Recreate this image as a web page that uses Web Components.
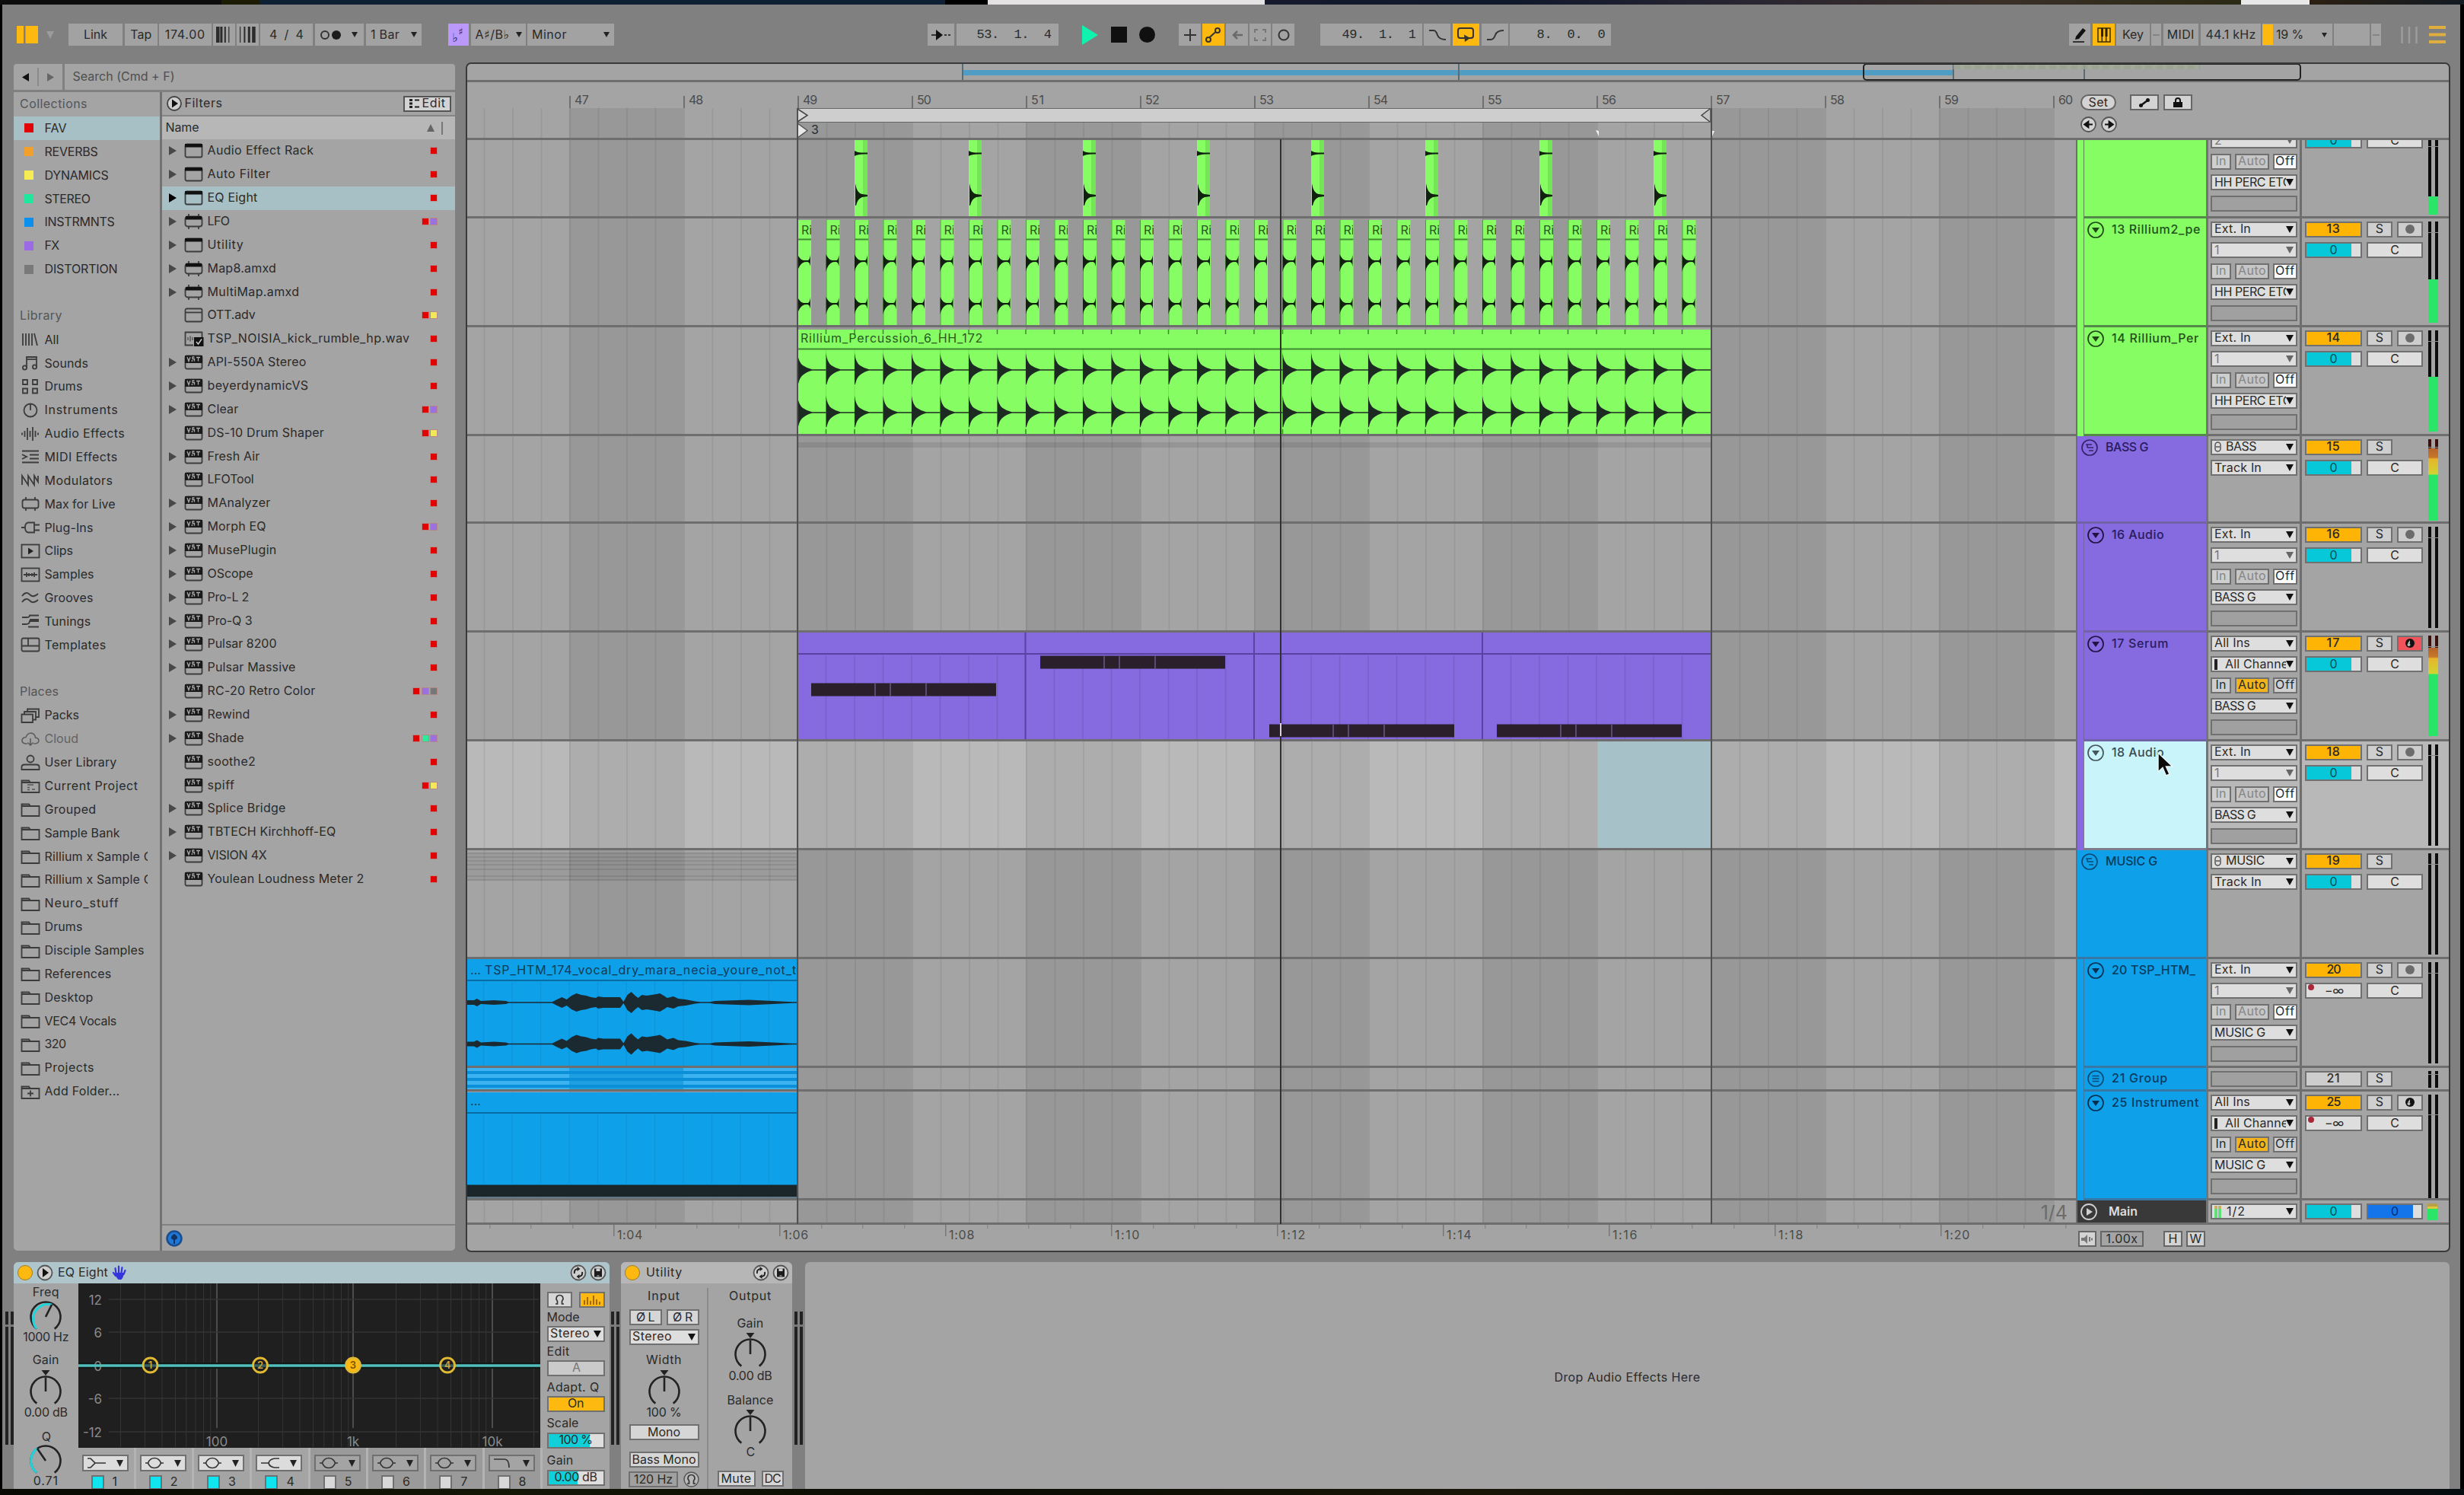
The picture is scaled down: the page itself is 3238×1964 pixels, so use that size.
<!DOCTYPE html>
<html lang="en"><head><meta charset="utf-8"><title>Live Set</title>
<style>
html,body{margin:0;padding:0;background:#000}
body{width:3238px;height:1964px;overflow:hidden;font-family:Inter,"Liberation Sans",sans-serif;font-size:16px;color:#2a2a2a}
</style></head><body>
<live-app></live-app>
<script>
const BASE=`:host{display:block;box-sizing:border-box}*{box-sizing:border-box}svg{display:block;overflow:visible}.v{display:flex;flex-direction:column}.h{display:flex}.c{display:flex;align-items:center;justify-content:center}`;
function def(name,css,render){
  customElements.define(name,class extends HTMLElement{
    connectedCallback(){
      if(this.shadowRoot)return;
      const r=this.attachShadow({mode:'open'});
      r.innerHTML=`<style>${BASE}${css}</style>${render(this)}`;
    }
  });
}
const A=(e,n,d='')=>e.getAttribute(n)??d;
const T=(s,w,st='')=>`<t-x ${w?`w="${w}"`:''} style="${st}">${s}</t-x>`;
/* horizontal run: items are [left, right, markup, style] */
function run(start,items){let p=start;return items.map(([a,b,m,s=''])=>{const o=`<div class="c" style="flex:none;margin-left:${(a-p).toFixed(2)}px;width:${(b-a).toFixed(2)}px;${s}">${m}</div>`;p=b;return o}).join('')}
/* vertical stack: items are [centre, height, markup, style] */
function stack(start,items){let p=start;return items.map(([c,h,m,s=''])=>{const t=c-h/2;const o=`<div class="c" style="flex:none;margin-top:${(t-p).toFixed(2)}px;height:${h}px;${s}">${m}</div>`;p=t+h;return o}).join('')}
const svg=(w,h,b,st='')=>`<svg width="${w}" height="${h}" viewBox="0 0 ${w} ${h}" style="flex:none;${st}">${b}</svg>`;
const tri=(c='#111',w=11,h=9)=>svg(w,h,`<path d="M0 0H${w}L${w/2} ${h}Z" fill="${c}"/>`);

def('t-x',`:host{display:inline-block;white-space:pre;line-height:19px;padding-bottom:1px;flex:none}`,()=>`<slot></slot>`);

/* ---------- toolbar ---------- */
def('tool-bar',`:host{height:76px;padding-top:25px}.bar{display:flex;height:29px}.b{height:29px;background:#a3a3a3}.g{display:flex}`,()=>{
  const B='background:#a2a2a2;height:29px;',Y='background:#fdb90f;height:29px;',S='stroke="#333" fill="none" stroke-width="2"';
  const bars=(ws)=>svg(22,21,ws.map((w,i)=>`<rect x="${i*5.4}" width="${w}" height="21" fill="#2c2c2c"/>`).join(''));
  const it=[
   [22,50,svg(28,23,`<path d="M0 0H9V23H0ZM11.5 0H28V23H11.5Z" fill="#fdb90f"/>`)],
   [60,71,tri('#9b9b9b',10,10)],
   [90,161,T('Link',31),B],[163.5,207,T('Tap',28),B],[209,277.5,T('174.00',53),B],
   [280,309,bars([4.5,3,2,1.2]),B],[311,340,bars([1.2,2,3,4.5]),B],
   [342,411,T('4 &nbsp;/ &nbsp;4',45),B],
   [413.5,478,svg(28,14,`<circle cx="6" cy="7" r="5" ${S}/><circle cx="21" cy="7" r="6" fill="#1c1c1c"/>`)+'<i style="width:13px"></i>'+tri('#222',8,7),B],
   [481,554,T('1 Bar',38)+'<i style="width:15px"></i>'+tri('#222',8,7),B],
   [588.5,616,T('♭',8,'font:16px DejaVu Sans;margin-top:8px')+T('♯',8,'font:13px DejaVu Sans;margin-top:-8px'),'background:#bb99fb;height:29px;color:#35235a'],
   [619,691,T('A♯/B♭',45,'font-family:Inter,DejaVu Sans')+'<i style="width:8px"></i>'+tri('#222',8,7),B],
   [693,807,T('Minor',46)+'<i style="width:48px"></i>'+tri('#222',8,7),B],
   [1219,1254,svg(26,14,`<path d="M0 7H8" ${S} stroke-width="2.5"/><path d="M6 0L15 7L6 14Z" fill="#111"/><path d="M17 7h3M22 7h3" ${S}/>`),B],
   [1256.5,1390.5,T('53. &nbsp;1. &nbsp;4',98,'font:17px Liberation Mono;margin-left:18px'),B],
   [1422,1443,svg(21,26,`<path d="M0 0L21 13L0 26Z" fill="#0ff3ae"/>`)],
   [1460,1481,svg(21,21,`<rect width="21" height="21" fill="#101010"/>`)],
   [1497,1518,svg(21,21,`<circle cx="10.5" cy="10.5" r="10.5" fill="#101010"/>`)],
   [1549,1578,svg(16,16,`<path d="M8 0V16M0 8H16" ${S}/>`),B],
   [1579.5,1609,svg(20,20,`<path d="M5.5 13L9 10L11 8L14 6" ${S}/><circle cx="4" cy="16" r="3" ${S}/><circle cx="16" cy="4" r="3" ${S}/>`),Y],
   [1611,1640,svg(14,12,`<path d="M2 6H14M7 1L2 6L7 11" stroke="#6a6a6a" fill="none" stroke-width="2.5"/>`),B],
   [1642,1670,svg(16,16,`<path d="M1 5V1H5M11 1H15V5M15 11V15H11M5 15H1V11" stroke="#777" fill="none" stroke-width="2"/>`),B],
   [1672,1701,svg(16,16,`<circle cx="8" cy="8" r="6.5" ${S}/>`),B],
   [1735,1869,T('49. &nbsp;1. &nbsp;1',97,'font:17px Liberation Mono;margin-left:20px'),B],
   [1871,1906,svg(22,14,`<path d="M0 1H6Q9 1 11 7Q13 13 22 13" ${S}/>`),B],
   [1908.5,1944,svg(22,20,`<path d="M15 14H18Q21 14 21 11V4Q21 1 18 1H4Q1 1 1 4V11Q1 14 4 14H11" ${S}/><path d="M9 9.5L17 14L10 19Z" fill="#333"/>`),Y],
   [1947,1982,svg(22,14,`<path d="M0 13H5Q9 13 11 7Q13 1 22 1" ${S}/>`),B],
   [1984,2117,T('8. &nbsp;0. &nbsp;0',90,'font:17px Liberation Mono;margin-left:28px'),B],
   [2719,2747,svg(20,20,`<path d="M5 12L14 1L18 4L9 15L4 16Z" fill="#111"/><path d="M1 19H16" ${S}/>`),B],
   [2750,2779,svg(18,20,`<path d="M1 1H17V19H1ZM6.3 1V19M11.7 1V19" stroke="#3a2c05" fill="none" stroke-width="1.5"/><path d="M5 1h3v11H5zM10.500 1h3v11h-3z" fill="#2b2105"/>`),Y],
   [2781,2825,T('Key',28),B],[2827,2840,'<i style="width:9px;height:2px;background:#858585"></i>',B],
   [2842.5,2889,T('MIDI',36),B],[2892,2971,T('44.1 kHz',66),B],
   [2973,3065,'<i style="width:14px;height:27px;background:#fdb90f;margin-right:4px"></i>'+T('19 %',36)+'<i style="width:24px"></i>'+tri('#222',7,6)+'<i style="flex:1"></i>',B+'justify-content:flex-start'],
   [3067,3114,'',B],[3116,3129,'<i style="width:9px;height:2px;background:#858585"></i>',B],
   [3155,3178,svg(23,22,`<path d="M1.500 0V22M11 0V22M20.500 0V22" stroke="#9c9c9c" stroke-width="2.500"/>`)],
   [3192,3214,svg(22,23,`<path d="M0 2H22M0 11.500H22M0 21H22" stroke="#dfae3e" stroke-width="4"/>`)]];
  return `<div class="bar">${run(3,it)}</div>`;
});

/* ---------- browser ---------- */
const K='stroke="#3c3c3c" fill="none" stroke-width="1.8"';
const folder=`<path d="M1.500 3.500H11L13 6H24.500V19H1.500ZM1.500 6H13" ${K}/>`;
const ICON={
 all:`<path d="M3 2V18M7 2V18M11 2V18M15 2V18M18 2L22 18" ${K}/>`,
 sounds:`<path d="M8 16V2H21V15" ${K}/><path d="M8 5H21" ${K}/><circle cx="5.500" cy="16" r="2.600" ${K}/><circle cx="18.500" cy="15" r="2.600" ${K}/>`,
 drums:`<path d="M3 1H9V7H3ZM16 1H22V7H16ZM3 12.500H9V18.500H3ZM16 12.500H22V18.500H16Z" ${K}/>`,
 inst:`<circle cx="13" cy="10" r="8.500" ${K}/><path d="M13 2V10" ${K}/>`,
 afx:`<path d="M2 8.500V11.500M5.500 6V14M9 2V18M12.500 6V14M16 1V19M19.500 6V14M23 8.500V11.500" ${K}/>`,
 mfx:`<path d="M2 2.500H24M2 17.500H24M12 7.500H24M12 12.500H24M2 7L8 10L2 13" ${K}/>`,
 mod:`<path d="M2 16V4L10 16V4L18 16V4L23 12V4" ${K}/>`,
 max:`<rect x="2.500" y="4.500" width="21" height="11" rx="2.500" ${K}/><path d="M7 1V4.500M19 1V4.500M7 15.500V19M19 15.500V19" ${K}/>`,
 plug:`<path d="M1 10H6M18 6.500H25M18 13.500H25" ${K}/><path d="M10 3.500H18V16.500H10Q6 16 6 10Q6 4 10 3.500Z" ${K}/>`,
 clips:`<rect x="1.500" y="1.500" width="23" height="17" ${K}/><path d="M10 5.500L17 10L10 14.500Z" fill="#222"/>`,
 samples:`<rect x="1.500" y="1.500" width="23" height="17" ${K}/><path d="M4 10H22M8 7V13M11 8V12M15 8V12M18 7V13" ${K}/>`,
 grooves:`<path d="M2 7Q7 0 12 5T23 4M2 15Q7 8 12 13T23 12" ${K}/>`,
 tunings:`<path d="M2 5H8Q12 5 12 2.500H24M2 14H7Q12 14 12 10H24M12 8H24M10 17.500H24" ${K}/>`,
 templates:`<rect x="1.500" y="1.500" width="23" height="17" rx="2" ${K}/><path d="M1.500 11.500H24.500M10 1.500V11.500" ${K}/>`,
 packs:`<path d="M1.500 8.500H16V19H1.500ZM5 8.500V5H20V15.500H16M9 5V1.500H24V12H20" ${K}/>`,
 cloud:`<path d="M9 16H6Q1.500 15 2 11Q3 7.500 7 7.500Q9 2 14 2Q19 3 19.500 8Q24 8.500 24 12.500Q23.500 16 17 16M13 9V18M9.500 14.500L13 18L16.500 14.500" stroke="#5d5d5d" fill="none" stroke-width="1.600"/>`,
 user:`<circle cx="13" cy="5" r="4.500" ${K}/><path d="M1.500 19V15Q2 12.500 5 12.500H21Q24 12.500 24.500 15V19Z" ${K}/>`,
 proj:folder+`<path d="M9 9H17M9 12.500H12M15 15H19M9 15.500H12" stroke="#555" stroke-width="1.500"/>`,
 folder,
 add:folder+`<path d="M13 8.500V16.500M9 12.500H17" ${K}/>`
};
def('nav-row',`:host{height:30.87px;display:flex;align-items:center;padding-left:9px;overflow:hidden;width:191.500px}
 :host([on]){background:#a6c0c6}.i{width:31.500px;flex:none}.s{width:12px;height:12px;margin-left:5px}:host([head]){padding-left:8px;color:#555}:host([dim]){color:#636363}.clip{overflow:hidden;width:135px;flex:none;white-space:nowrap}`,e=>{
  if(e.hasAttribute('head'))return T(A(e,'label'),A(e,'w'));
  const sw=A(e,'sw');
  return `<div class="i">${sw?`<div class="s" style="background:${sw}"></div>`:svg(26,20,ICON[A(e,'icon')]||'')}</div><div class="clip">${T(A(e,'label'),A(e,'w'))}</div>`;
});
const FI={
 dev:`<rect x="1.500" y="1.500" width="22" height="17" rx="2" ${K}/><path d="M1 1H24V5.500H1Z" fill="#111"/>`,
 max:`<rect x="1.500" y="3.500" width="22" height="13" rx="3" ${K}/><path d="M2 3H23V7.500H2Z" fill="#111"/><path d="M6 0V3M19 0V3M6 17V20M19 17V20" ${K}/>`,
 pre:`<rect x="1.500" y="1.500" width="22" height="17" rx="2" ${K}/><path d="M1.500 6.500H23.500" ${K}/>`,
 wav:`<path d="M12 18.500H1.500V1.500H23.500V8" ${K}/><path d="M5 8V12M8 6.500V13.500M11 8V12" stroke="#555" stroke-width="1.500"/><rect x="13" y="8" width="12.500" height="12" fill="#111"/><path d="M16 14L18.500 17L23 10.500" stroke="#ccc" fill="none" stroke-width="1.500"/>`,
 vst:`<rect x="1.500" y="1.500" width="22" height="17" rx="2" ${K}/><path d="M1 1H24V11H1Z" fill="#1a1a1a"/><path d="M4 3L6 8.500L8 3M11.500 8H9.500M13.500 3H11V5.500H13.500V8.500M16 3.500H21M18.500 3.500V8.500" stroke="#aaa" fill="none" stroke-width="1.300"/>`
};
const DC={r:'#e10303',p:'#9c70e0',y:'#f3e85b',g:'#2fe89c',d:'#777'};
def('file-row',`:host{height:30.87px;display:flex;align-items:center;padding-left:9px;padding-right:24px}:host([on]){background:#a6c0c6}.a{width:20px;flex:none}.i{width:31px;flex:none}.d{margin-left:auto;display:flex;gap:3.500px}.d i{width:8px;height:8px;outline:1px solid #d8403a44}`,e=>
 `<div class="a">${e.hasAttribute('leaf')?'':svg(10,12,`<path d="M0 0L10 6L0 12Z" fill="${e.hasAttribute('on')?'#000':'#484848'}"/>`)}</div><div class="i">${svg(25,20,FI[A(e,'icon')])}</div>${T(A(e,'label'),A(e,'w'))}<div class="d">${[...A(e,'dots')].map(c=>`<i style="background:${DC[c]}"></i>`).join('')}</div>`);
def('browser-panel',`:host{width:580px;margin:2px 0 0 15px;display:flex;flex-direction:column}
 .s{height:34px;display:flex;gap:3px}.nv{width:63.500px;background:#a4a4a4;border-radius:4px 0 0 0;display:flex;align-items:center}.nv>*{flex:1;height:24px}.nv>*+*{border-left:2px solid #8a8a8a}
 .q{flex:1;background:#a4a4a4;border-radius:0 4px 0 0;display:flex;align-items:center;padding-left:11px;color:#4e4e4e}
 .b{margin-top:3px;height:1522px;display:flex;background:#a4a4a4;border-radius:0 0 5px 5px;overflow:hidden}.l{width:194.500px;border-right:3px solid #727272}.hd{height:32px;padding-left:8px;display:flex;align-items:center;color:#555}
 .r{flex:1;display:flex;flex-direction:column}.fh{height:32px;border-bottom:2px solid #858585;display:flex;align-items:center;padding:0 5px 0 6px}.ed{margin-left:auto;width:63px;height:21px;border:2px solid #555;background:#d3d3d3;gap:4px}
 .nm{height:30px;background:#b7b7b7;display:flex;align-items:center;padding:0 16px 0 5px}.ft{margin-top:auto;height:35px;border-top:2px solid #818181;padding:6px 0 0 5px}`,()=>{
 const C=[['FAV',29,'#e10303',1],['REVERBS',70,'#f2a02b'],['DYNAMICS',84,'#f6ec53'],['STEREO',60,'#1fe79c'],['INSTRMNTS',92,'#0b90ee'],['FX',19,'#9b6be4'],['DISTORTION',96,'#797979']];
 const L=[['All',19,'all'],['Sounds',57.5,'sounds'],['Drums',50,'drums'],['Instruments',97,'inst'],['Audio Effects',105.5,'afx'],['MIDI Effects',96,'mfx'],['Modulators',90,'mod'],['Max for Live',93,'max'],['Plug-Ins',64,'plug'],['Clips',37.5,'clips'],['Samples',65,'samples'],['Grooves',64,'grooves'],['Tunings',61,'tunings'],['Templates',81,'templates']];
 const P=[['Packs',45.5,'packs'],['Cloud',44.5,'cloud'],['User Library',95,'user'],['Current Project',123,'proj'],['Grouped',68,'folder'],['Sample Bank',99,'folder'],['Rillium x Sample C',142,'folder'],['Rillium x Sample C',142,'folder'],['Neuro_stuff',98,'folder'],['Drums',50,'folder'],['Disciple Samples',131,'folder'],['References',88,'folder'],['Desktop',64,'folder'],['VEC4 Vocals',94.5,'folder'],['320',28,'folder'],['Projects',65.5,'folder'],['Add Folder...',99,'add']];
 const F=[['Audio Effect Rack',140,'dev','r'],['Auto Filter',83,'dev','r'],['EQ Eight',66,'dev','r'],['LFO',29,'max','rp'],['Utility',48,'dev','r'],['Map8.amxd',90.5,'max','r'],['MultiMap.amxd',121,'max','r'],['OTT.adv',63,'pre','ry',1],['TSP_NOISIA_kick_rumble_hp.wav',266,'wav','r',1],['API-550A Stereo',130,'vst','r'],['beyerdynamicVS',133,'vst','r'],['Clear',41,'vst','rp'],['DS-10 Drum Shaper',153.5,'vst','ry',1],['Fresh Air',69,'vst','r'],['LFOTool',61,'vst','r',1],['MAnalyzer',83,'vst','r'],['Morph EQ',77,'vst','rp'],['MusePlugin',91,'vst','r'],['OScope',60,'vst','r'],['Pro-L 2',54.5,'vst','r'],['Pro-Q 3',59,'vst','r'],['Pulsar 8200',91,'vst','r'],['Pulsar Massive',116,'vst','r'],['RC-20 Retro Color',142,'vst','rpd',1],['Rewind',56,'vst','r'],['Shade',48,'vst','rgp'],['soothe2',63.6,'vst','r',1],['spiff',36,'vst','ry',1],['Splice Bridge',103,'vst','r'],['TBTECH Kirchhoff-EQ',169,'vst','r'],['VISION 4X',78,'vst','r'],['Youlean Loudness Meter 2',206,'vst','r',1]];
 const n=a=>a.map(([l,w,i])=>`<nav-row label="${l}" w="${w}" icon="${i}" ${i=='cloud'?'dim':''}></nav-row>`).join('');
 return `<div class="s"><div class="nv"><div class="c">${svg(9,11,'<path d="M9 0V11L0 5.500Z" fill="#111"/>')}</div><div class="c">${svg(9,11,'<path d="M0 0V11L9 5.500Z" fill="#666"/>')}</div></div><div class="q">${T('Search (Cmd + F)',134)}</div></div>
 <div class="b"><div class="l"><div class="hd">${T('Collections',89)}</div>${C.map(([l,w,c,o])=>`<nav-row label="${l}" w="${w}" sw="${c}" ${o?'on':''}></nav-row>`).join('')}<nav-row></nav-row><nav-row head label="Library" w="56"></nav-row>${n(L)}<nav-row></nav-row><nav-row head label="Places" w="51"></nav-row>${n(P)}</div>
 <div class="r"><div class="fh">${svg(20,20,'<circle cx="10" cy="10" r="9" fill="#d0d0d0" stroke="#444" stroke-width="1.800"/><path d="M7 4.500L15 10L7 15.500Z" fill="#111"/>')}<i style="width:4px"></i>${T('Filters',50)}<div class="ed c">${svg(13,12,'<path d="M0 1.500H4M0 6H4M0 10.500H4" stroke="#222" stroke-width="3"/><path d="M7 1.500H13M7 10.500H13" stroke="#222" stroke-width="2"/>')}${T('Edit',31)}</div></div>
 <div class="nm">${T('Name',44)}<i style="flex:1"></i>${svg(10,10,'<path d="M5 0L10 10H0Z" fill="#666"/>')}<i style="width:2px;height:17px;background:#777;margin-left:9px"></i></div>
 ${F.map(([l,w,i,d,f],k)=>`<file-row label="${l}" w="${w}" icon="${i}" dots="${d}" ${f?'leaf':''} ${k==2?'on':''}></file-row>`).join('')}
 <div class="ft"><div style="width:22px">${svg(22,22,'<circle cx="11" cy="11" r="9.500" fill="#1f77d8" stroke="#1b4c8d" stroke-width="2.500"/><path d="M11 5Q16 8 15 11L12 13V18H10V13L7 11Q6 8 11 5Z" fill="#12335f"/>')}</div></div></div></div>`;
});

/* ---------- arrangement lanes ---------- */
const G='#87fd64',P_='#856ae0',BL='#0fa0ea',DK='#1c2a22';
function grid(h,sel){return `background-image:linear-gradient(90deg,rgba(0,0,0,.065) 0 1.500px,transparent 1.500px),linear-gradient(90deg,${sel?'#adadad 0 150px,#b9b9b9 150px':'#989898 0 150px,#a4a4a4 150px'});background-size:37.500px 100%,300px 100%;background-position:134px 0,134px 0;`}
const X0=614,BAR=150,S0=1048-X0;
const VOC=[[20,3],[34,3],[40,5],[48,2],[75,3],[100,2],[105,.7],[195,.7],[205,4],[215,7],[225,4],[235,9],[245,12],[255,10],[265,9],[275,7],[285,6],[290,8],[300,7],[320,7],[335,7],[342,1],[350,10],[358,14],[366,9],[372,6],[380,10],[390,9],[400,10],[410,11],[417,12],[425,9],[432,6],[445,8],[455,5],[470,4],[490,1.5],[500,.7],[520,.7],[530,2],[600,3.5],[650,2],[690,.7],[702,.7]];
const LANES={
 t12(){let s='';for(let k=0;k<8;k++){const x=S0+75+k*150;s+=`<g transform="translate(${x} 0)"><rect width="17" height="100" fill="${G}"/><rect x="11" width="6" height="100" fill="#6cdc50" opacity=".7"/><path d="M0 14Q3 17 17 16.500V18.500Q4 18 0 21Z" fill="#12200f"/><path d="M1 57Q3 70 10 71L17 72V74L10 75Q4 77 2 86H1Z" fill="#12200f"/></g>`}return s},
 t13(){let s='';for(let k=0;k<32;k++){const x=S0+k*37.5;const w=y=>`<path d="M0 ${y-9}Q3 ${y-2} 8 ${y-1}L14 ${y-1}Q16 ${y-2} 17 ${y-8}V${y+7}Q16 ${y+1} 13 ${y+1}L9 ${y+1.2}Q2 ${y+4} 0 ${y+14}Z" fill="#12200f"/>`;s+=`<g transform="translate(${x} 0)"><rect y="2" width="18" height="138" fill="${G}"/><path d="M.5 2V140" stroke="#4c9a3a"/><path d="M0 27.500H18" stroke="#3f8a30" stroke-width="2"/>${w(56)}${w(112)}</g>`}return s},
 t14(){let s=`<rect x="${S0}" y="3" width="1200" height="137" fill="${G}"/><path d="M${S0} 28.500h1200" stroke="#3f8a30" stroke-width="2"/>`;
  for(let k=0;k<32;k++){const x=S0+k*37.5;const w=y=>`<path d="M0 ${y-22}Q1.500 ${y-10} 7 ${y-6}Q13 ${y-2} 19 ${y-.7}H37.500V${y+.7}H19Q12 ${y+2.500} 8 ${y+6}Q3 ${y+9} .8 ${y+19}H0Z" fill="${DK}"/>`;s+=`<g transform="translate(${x} 0)"><path d="M0 3v6M0 134V140" stroke="#2c6a20" stroke-width="1.500" opacity=".8"/><path d="M0 29V140" stroke="#357a28" stroke-width="1" opacity=".2"/>${w(56)}${w(112)}</g>`}return s},
 t15(){return `<rect x="${S0}" y="8" width="1200" height="7" fill="#000" opacity=".09"/>`},
 t17(){let s=`<rect x="${S0}" y="0" width="1200" height="142" fill="${P_}"/>`;for(let k=1;k<32;k++)s+=`<path d="M${S0+k*37.5} 30V140" stroke="#000" opacity=".09" stroke-width="1.500"/>`;
  s+=`<path d="M${S0} 28h1200M${S0+299.5} 0V140M${S0+600} 0V140M${S0+900} 0V140" stroke="#5843a2" stroke-width="2"/>`;
  [[18,66.5],[319,30.5],[620,120.5],[919,120.5]].forEach(([x,y])=>{s+=`<rect x="${S0+x}" y="${y}" width="243" height="17" fill="#2b1f2c"/><path d="M${S0+x+84} ${y}v17M${S0+x+104} ${y}v17M${S0+x+151} ${y}v17" stroke="#6b5a86" stroke-width="1.500"/>`});return s},
 t18(){return `<rect x="${S0+1051.5}" width="148.500" height="140" fill="#a5c3c9" opacity=".93"/>`},
 t19(){let s='<rect y="3" width="434" height="37" fill="#000" opacity=".05"/>';[4,9,14,19,25,34,39].forEach(y=>s+=`<path d="M0 ${y}H434" stroke="#000" opacity=".08" stroke-width="2"/>`);return s},
 t20(){const w=y=>{const f=VOC.map(([x,a])=>[(x-20)/1.568,a]);return `<path d="M${f.map(([x,a])=>`${x.toFixed(1)} ${y-a}`).join('L')}L${f.slice().reverse().map(([x,a])=>`${x.toFixed(1)} ${y+a}`).join('L')}Z" fill="#1b2a30"/>`};
  let s=`<rect width="434" height="141" fill="${BL}"/><path d="M0 28H434" stroke="#0a6ba0" stroke-width="2"/>`;for(let k=0;k<12;k++)s+=`<path d="M${21.500+k*37.5} 30V140" stroke="#000" opacity=".06" stroke-width="1.500"/>`;return s+w(57)+w(111.500)},
 t21(){return `<rect width="434" height="28" fill="#3db2f0"/><rect x="134" width="150" height="28" fill="#1d9fe2"/><path d="M0 6H434M0 15H434M0 24H434" stroke="#0a8fd8" stroke-width="4"/>`},
 t25(){let s=`<rect width="434" height="122" y="1" fill="${BL}"/><path d="M0 28H434" stroke="#0a6ba0" stroke-width="2"/>`;for(let k=0;k<12;k++)s+=`<path d="M${21.500+k*37.5} 30V120" stroke="#000" opacity=".06" stroke-width="1.500"/>`;return s+`<rect y="122.500" width="434" height="16" fill="#1a262a"/><rect y="138.500" width="434" height="5" fill="#5f7f90"/>`}
};
def('track-lane',`:host{flex:none;width:2114px;overflow:hidden;border-bottom:3px solid #6e6e6e;position:relative}.g{height:100%;position:relative}svg{position:absolute;left:0;top:0}
 .nm{position:absolute;left:0;top:0;width:1634px;display:flex;color:#28591f}.ri{width:37.500px;flex:none;padding:5px 0 0 5px}.ri div{width:12.500px;overflow:hidden}.q{position:absolute;top:3px;right:11px;font-size:25px;color:#6c6c6c;line-height:26px}`,e=>{
 const id=A(e,'kind');let t='';
 if(id=='t13')t=`<div class="nm" style="padding-left:434px">${Array(32).fill('<div class="ri"><div>'+T('Ri')+'</div></div>').join('')}</div>`;
 if(id=='t14')t=`<div class="nm" style="padding:4.500px 0 0 438px">${T('Rillium_Percussion_6_HH_172',240)}</div>`;
 if(id=='t20')t=`<div class="nm" style="padding:5px 0 0 4px;width:434px;overflow:hidden;color:#123a56">${T('...',14)}<i style="width:5px;flex:none"></i>${T('TSP_HTM_174_vocal_dry_mara_necia_youre_not_t',410)}</div>`;
 if(id=='t25')t=`<div class="nm" style="padding:3px 0 0 4px;color:#123a56">${T('...',14)}</div>`;
 if(id=='main')t=`<div class="q">1/4</div>`;
 return `<div class="g" style="${grid(0,id=='t18')}">${LANES[id]?svg(2114,10,LANES[id]()):''}${t}</div>`;
});

/* ---------- track header ---------- */
def('value-box',`:host{height:21px;border:2px solid #707070;background:var(--bg,#dedede);display:flex;align-items:center;justify-content:center;overflow:hidden;flex:none}
 :host([drop]){justify-content:flex-start;padding:0 3px 0 3px}.s{flex:1}.t{overflow:hidden;flex:1;display:flex;align-items:center}`,e=>e.hasAttribute('drop')?`<div class="t"><slot></slot></div>${tri(A(e,'drop')=='dim'?'#666':'#111',10,9)}`:`<slot></slot>`);
def('level-meter',`:host{width:13px;display:flex;justify-content:space-between;position:relative;flex:none}i{width:4px;background:#0c0c0c}.f{position:absolute;left:0;right:0;bottom:0}.k{position:absolute;left:0;right:0;height:1.500px;background:#8d8d8d}`,e=>{
 const h=+A(e,'fill','0'),hot=e.hasAttribute('hot');
 return `<i ${hot?'style="background:#3b0f0c"':''}></i><i ${hot?'style="background:#3b0f0c"':''}></i>`+(h?`<div class="f" style="height:${h}px;background:${hot?`linear-gradient(#b5632a 0,#c7772a 12px,#e6b52b 14px,#cfd432 34px,#28e567 35px)`:'#2ae568'}"></div>`:'')+(e.hasAttribute('tick')?`<div class="k" style="top:${A(e,'tick')}px"></div>`:'');
});
def('track-head',`:host{display:flex;width:490px;flex:none;overflow:hidden}
 .name{width:171px;flex:none;display:flex;border-left:2px solid #6e6e6e;background:var(--c)}.st{width:9px;border-right:1.500px solid var(--l);flex:none}.in{flex:1;border-bottom:3px solid var(--l);background:var(--ic,var(--c));padding-top:var(--pt,3.500px);padding-left:4px;display:flex;gap:10px;font-weight:500;overflow:hidden;color:var(--tc,#222)}
 .in t-x{line-height:21px}
 .io{width:123px;border-left:3px solid #757575;border-bottom:3px solid #6e6e6e;padding:3.600px 4px 0 3px;display:flex;flex-direction:column;flex:none;background:var(--bgc,#a4a4a4);overflow:hidden}
 .io value-box{width:114px}.m{display:flex;gap:5px}
 .mx{flex:1;border-left:3px solid #6e6e6e;border-bottom:3px solid #6e6e6e;padding:3.600px 0 0 4px;display:flex;background:var(--bgc,#a4a4a4);overflow:hidden}.ctl{width:162px;display:flex;flex-direction:column;gap:6.600px;flex:none}.r{display:flex;gap:6px}
 .rs{display:flex;flex-direction:column;gap:6.600px}`,e=>{
 const k=A(e,'kind'),n=A(e,'num'),nm=A(e,'label'),w=A(e,'w'),route=A(e,'route'),grp=k=='group',midi=k=='midi',sub=k=='sub',off=+A(e,'cut','0');
 const circ=grp?`<path d="M6 7H14M8 11H16M10 15H16M8 7V11" stroke="${A(e,'ic','#222')}" stroke-width="1.500" fill="none"/>`:sub?`<path d="M6.500 7.500H15.500M6.500 11H15.500M6.500 14.500H15.500" stroke="#0b4a78" stroke-width="1.500"/>`:`<path d="M6 8H16L11 15Z" fill="${A(e,'ic','#222')}"/>`;
 const icon=svg(22,22,`<circle cx="11" cy="11" r="10" fill="none" stroke="${A(e,'ic','#222')}" stroke-width="1.700"/>`+circ);
 const mon=(o)=>{const d='color:#858585';return `<div class="m"><value-box style="width:27px;--bg:#cfcfcf">${T('In',14,o=='midi'?'':d)}</value-box><value-box style="width:45px;--bg:${o=='midi'?'#f3b31a':'#c6c6c6'}">${T('Auto',37,o=='midi'?'':d)}</value-box><value-box style="width:32px;--bg:${o=='midi'?'#cfcfcf':'#fafafa'}">${T('Off',26)}</value-box></div>`};
 let io='';
 if(grp)io=`<value-box drop>${svg(9,14,'<rect x="1" y="1" width="7" height="12" rx="3.500" stroke="#555" stroke-width="1.500" fill="none"/><path d="M2 7H7" stroke="#555" stroke-width="1.500"/>')}<i style="width:6px;flex:none"></i>${T(A(e,'src'),A(e,'sw'))}</value-box><value-box drop>${T('Track In',62)}</value-box>`;
 else if(sub)io=`<value-box style="--bg:#a0a0a0"></value-box>`;
 else io=`<value-box drop>${midi?T('All Ins',47):T('Ext. In',48)}</value-box><value-box drop="${midi?'':'dim'}">${midi?'<i style="flex:none;width:4px;height:14px;background:#222;margin-right:10px"></i>'+T('All Channels',96):T(A(e,'ch','1'),0,'color:#777')}</value-box>${mon(midi?'midi':'')}<value-box drop>${T(route,A(e,'rw'))}</value-box><value-box style="--bg:#a0a0a0"></value-box>`;
 const vol=A(e,'inf')?`<value-box style="width:75px">${svg(8,8,'<circle cx="4" cy="4" r="4" fill="#a8273b"/>','align-self:flex-start;margin-right:14px')}${T('−∞',25)}<i style="width:20px"></i></value-box>`:`<value-box style="width:75px;--bg:linear-gradient(90deg,#06c8d9 0 59px,#dedede 59px)">${T('0',0,'color:#104a55')}</value-box>`;
 const rec=midi?svg(12,12,'<circle cx="6" cy="6" r="6" fill="#111"/><path d="M6 2V6H3Z" fill="#bbb"/><circle cx="4.500" cy="8" r="2" fill="#bbb"/>'):svg(12,12,'<circle cx="6" cy="6" r="6" fill="#6c6c6c"/>');
 const mx=`<div class="r"><value-box style="width:75px;--bg:${sub?'#cdcdcd':'#fdb405'};font-weight:500">${T(n,18)}</value-box><value-box style="width:34px;--bg:#cfcfcf">${T('S')}</value-box>${grp||sub?'':`<value-box style="width:34px;--bg:${A(e,'armed')?'#f0535a':'#cdcdcd'}">${rec}</value-box>`}</div>${sub?'':`<div class="r">${vol}<value-box style="width:74px">${T('C')}</value-box></div>`}`;
 const mt=A(e,'fill','0');
 return `<div class="name">${grp?'':'<div class="st"></div>'}<div class="in" style="${grp?'padding-left:5px':''}">${off?'':icon+T(nm,w)}</div></div>
 <div class="io"><div class="rs" style="margin-top:-${off}px">${io}</div></div>
 <div class="mx"><div class="ctl" style="margin-top:-${off}px">${mx}</div><level-meter style="height:${A(e,'mh')}px;${off?'margin-top:-4px':''}" fill="${mt}" ${A(e,'hot')?'hot':''} tick="${A(e,'tick','14')}"></level-meter></div>`;
});
def('main-head',`:host{display:flex;width:490px;flex:none}.n{width:171px;border-left:2px solid #6e6e6e;border-bottom:3px solid #6e6e6e;background:#393939;display:flex;align-items:center;gap:15px;padding-left:4px;color:#dedede;font-weight:600}
 .io{width:123px;border-left:3px solid #757575;border-bottom:3px solid #6e6e6e;padding:4px 4px 0 3px}.mx{flex:1;border-left:3px solid #6e6e6e;border-bottom:3px solid #6e6e6e;padding:4px 0 0 4px;display:flex;gap:6px}`,()=>
 `<div class="n">${svg(22,22,'<circle cx="11" cy="11" r="10" fill="none" stroke="#cfcfcf" stroke-width="1.800"/><path d="M8 6L16 11L8 16Z" fill="#cfcfcf"/>')}${T('Main',38)}</div>
 <div class="io"><value-box drop style="width:114px">${svg(9,16,'<path d="M0 3H4V16H0ZM5 3H9V16H5Z" fill="#5fe07c"/><path d="M0 0H4V4H0ZM5 0H9V4H5Z" fill="#c9b060"/>')}<i style="width:7px;flex:none"></i>${T('1/2',25)}</value-box></div>
 <div class="mx"><value-box style="width:75px;--bg:linear-gradient(90deg,#06c8d9 0 59px,#dedede 59px)">${T('0',0,'color:#104a55')}</value-box><value-box style="width:74px;--bg:linear-gradient(90deg,#1474ea 0 59px,#dedede 59px)">${T('0',0,'color:#0b2f66')}</value-box><div style="width:13px;height:22px;background:linear-gradient(#b7a04a 0 4px,#dfc83a 4px 7px,#2ae568 7px)"></div></div>`);

/* ---------- arrangement ---------- */
def('arrange-view',`:host{width:2608px;height:1562.500px;margin-left:14px;border:2px solid #3a3a3a;border-radius:7px;background:#a4a4a4;display:flex;flex-direction:column;position:relative;overflow:hidden}
 .ov{height:21px;border-bottom:0;position:relative;flex:none;padding-top:8px}.ovl{height:3px;background:#6e6e6e;flex:none}.band{margin-left:650px;width:1302px;height:7px;background:#4f9dc4}
 .win{position:absolute;left:1834px;width:576px;top:-1px;height:23px;border:2.500px solid #222;border-radius:5px}.tk{position:absolute;top:0;height:21px;width:1.500px;background:#5b6b73}
 .rl{height:73px;display:flex;flex:none}.ru{width:2114px;display:flex;flex-direction:column;overflow:hidden}
 .lb{height:34px;display:flex;padding-left:134px;flex:none}.lb div{width:150px;flex:none;border-left:2px solid #707070;height:16px;margin-top:18px;padding-left:5px;color:#4b4b4b;display:flex;align-items:center;padding-bottom:4px}
 .lp{flex:1;display:flex;flex-direction:column}
 .loop{margin-left:434px;width:1200px;height:19px;background:#cecece;border:1.500px solid #666;border-left:0;display:flex;justify-content:space-between}
 .mk{margin-left:434px;display:flex;align-items:center;height:20px}
 .rh{padding:16px 0 0 6px;display:flex;flex-direction:column;gap:8px}.rh>div{display:flex}
 .tr{display:flex;flex:none}.ln{flex:none;height:3px;background:#6e6e6e}
 .vl{position:absolute;width:2px;background:#505050}
 .tm{flex:1;display:flex}.tt{width:2114px;display:flex;overflow:hidden}.tt div{width:218px;flex:none;height:34px;color:#4b4b4b;padding:3px 0 0 5px;background:linear-gradient(#777,#777) 0 0/1.500px 15px no-repeat,linear-gradient(#8a8a8a,#8a8a8a) 54.500px 0/1.500px 5px no-repeat,linear-gradient(#8a8a8a,#8a8a8a) 109px 0/1.500px 5px no-repeat,linear-gradient(#8a8a8a,#8a8a8a) 163.500px 0/1.500px 5px no-repeat}
 .bb{display:flex;padding:8px 0 0 3px}`,()=>{
 const gc=`--c:#87fd64;--l:#54894a;--tc:#23501b`,pc=`--c:#856ae0;--l:#7262a8;--tc:#2a1c5c`,bc=`--c:#0fa0ea;--l:#3878a4;--tc:#073b60`;
 const TR=[
  ['t12',103,`style="${gc}" cut="41" num="12" ch="2" route="HH PERC ETC" rw="101" mh="98" fill="24" tick="8"`],
  ['t13',143,`style="${gc}" num="13" label="13 Rillium2_pe" w="117" route="HH PERC ETC" rw="101" mh="133" fill="57" ic="#1f4518"`],
  ['t14',143,`style="${gc}" num="14" label="14 Rillium_Per" w="115" route="HH PERC ETC" rw="101" mh="133" fill="72" ic="#1f4518"`],
  ['t15',115,`style="${pc}" kind="group" num="15" label="BASS G" w="56" src="BASS" sw="40" mh="107" fill="95" hot="1" tick="10" ic="#32246b"`],
  ['t16',143,`style="${pc}" num="16" label="16 Audio" w="69" route="BASS G" rw="54" mh="133" ic="#1e143f"`],
  ['t17',143,`style="${pc}" kind="midi" armed="1" num="17" label="17 Serum" w="75" route="BASS G" rw="54" mh="132" fill="116" hot="1" ic="#1e143f"`],
  ['t18',143,`style="--c:#856ae0;--ic:#c9f5fa;--l:#7c7c8c;--tc:#3a4a50;--bgc:#b8b8b8" num="18" label="18 Audio" w="69" route="BASS G" rw="54" mh="133" ic="#46555a"`],
  ['t19',143,`style="${bc}" kind="group" num="19" label="MUSIC G" w="68" src="MUSIC" sw="51" mh="133" ic="#0b4a78"`],
  ['t20',143,`style="${bc}" num="20" label="20 TSP_HTM_" w="110" route="MUSIC G" rw="67" inf="1" mh="133" ic="#062f4d"`],
  ['t21',31,`style="${bc};--pt:3px" kind="sub" num="21" label="21 Group" w="74" mh="22" tick="4" ic="#0b4a78"`],
  ['t25',143,`style="${bc}" kind="midi" num="25" label="25 Instrument" w="115" route="MUSIC G" rw="67" inf="1" mh="137" tick="26" ic="#062f4d"`]];
 const bt=(w,m,s='')=>`<div class="c" style="width:${w}px;height:21px;border:2px solid #666;background:#d3d3d3;${s}">${m}</div>`;
 return `<div class="ov"><div class="band"></div><i class="tk" style="left:650px"></i><i class="tk" style="left:1302px"></i><i class="tk" style="left:1952px"></i><i class="tk" style="left:2124px"></i>
 <i style="position:absolute;left:1953px;top:0;width:325px;height:7px;background:repeating-linear-gradient(90deg,#9aa58f 0 9px,#a3aa98 9px 14px);opacity:.8"></i><div class="win"></div></div><div class="ovl"></div>
 <div class="rl"><div class="ru"><div class="lb">${[47,48,49,50,51,52,53,54,55,56,57,58,59,60].map(n=>`<div>${T(n,18)}</div>`).join('')}</div>
 <div class="lp" style="${grid()}"><div class="loop">${svg(14,17,'<path d="M0 0L13 8.500L0 17Z" fill="#d8d8d8" stroke="#444" stroke-width="1.500"/>')}${svg(14,17,'<path d="M14 0L3 8.500L14 17" fill="#c2c2c2" stroke="#444" stroke-width="1.500"/>')}</div>
 <div class="mk">${svg(14,19,'<path d="M0 0L13 9.500L0 19Z" fill="#e8e8e8" stroke="#555" stroke-width="1.500"/>')}<i style="width:4px"></i>${T('3',9)}<i style="width:1022px"></i>${svg(4,8,'<path d="M0 0L4 1V8Z" fill="#f2f2f2"/>','margin-top:8px')}<i style="width:149px"></i>${svg(3,7,'<path d="M0 0H3L0 7Z" fill="#f2f2f2"/>','margin-top:8px')}</div></div></div>
 <div class="rh"><div>${bt(47,T('Set',26),'border-radius:11px')}<i style="width:18px"></i>${bt(38,svg(14,12,'<path d="M3 9L11 3" stroke="#111" stroke-width="2.500"/><circle cx="2.500" cy="9.500" r="2.500" fill="#111"/><circle cx="11.500" cy="2.500" r="2.500" fill="#111"/>'))}<i style="width:6px"></i>${bt(38,svg(12,13,'<path d="M0 6H12V13H0Z" fill="#111"/><path d="M3 6V4Q3 1 6 1Q9 1 9 4V6" stroke="#111" fill="none" stroke-width="2"/>'))}</div>
 <div>${[-1,1].map(d=>svg(21,21,`<circle cx="10.500" cy="10.500" r="9.500" fill="#d3d3d3" stroke="#555" stroke-width="1.800"/><path transform="translate(10.500 10.500) scale(${d} 1)" d="M-5.500 0H1M0 -4V4L5.500 0Z" fill="#111" stroke="#111" stroke-width="1.800"/>`,'margin-right:5.500px')).join('')}</div></div></div>
 <div class="ln"></div>
 ${TR.map(([k,h,a])=>`<div class="tr" style="height:${h}px"><track-lane kind="${k}"></track-lane><track-head ${a}></track-head></div>`).join('')}
 <div class="tr" style="height:32px"><track-lane kind="main"></track-lane><main-head></main-head></div>
 <div class="tm"><div class="tt"><div style="width:192px;background-position:0 -50px,28.500px 0,83px 0,137.500px 0"></div>${['1:04','1:06','1:08','1:10','1:12','1:14','1:16','1:18','1:20'].map(t=>`<div>${T(t,34)}</div>`).join('')}</div>
 <div class="bb">${bt(24,svg(16,14,'<path d="M0 5H4L8 1V13L4 9H0Z" fill="#777"/><path d="M11 4V10M14 5.500V8.500" stroke="#777" stroke-width="2"/>'))}<i style="width:5px"></i>${bt(57,T('1.00x',42),'background:#a4a4a4')}<i style="width:26px"></i>${bt(25,T('H',12))}<i style="width:5px"></i>${bt(25,T('W',16))}</div></div>
 <i class="vl" style="left:433px;top:58px;height:1466px"></i><i class="vl" style="left:1633.500px;top:58px;height:1466px"></i><i class="vl" style="left:1067.500px;top:99px;height:1425px;background:#303030"></i><i class="vl" style="left:1067.500px;top:866px;height:17px;background:#d8d0e0"></i>`;
});

/* ---------- devices ---------- */
function dial(px,py,cy){return svg(44,44,`<path d="M10.300 37.600A19.500 19.500 0 1 1 33.700 37.600" fill="none" stroke="#222" stroke-width="2.600"/>${cy?`<path d="M10.300 37.600A19.500 19.500 0 0 1 ${22+px} ${22+py}" fill="none" stroke="#1fd5db" stroke-width="3"/>`:''}<path d="M22 22L${22+px} ${22+py}" stroke="#222" stroke-width="2.600"/>${cy?'':'<path d="M16.500 -6H27.500L22 1Z" fill="#222"/>'}`)}
const round=(m,x='')=>svg(22,22,`<circle cx="11" cy="11" r="9.500" fill="#cfcfcf" stroke="#555" stroke-width="1.800"/>${m}`,x);
const swap='<path d="M6 12Q5 7 10 6M16 10Q17 15 12 16" stroke="#222" stroke-width="2" fill="none"/><path d="M9.500 3L13.500 6L9.500 9ZM12.500 13L8.500 16L12.500 19Z" fill="#222"/>',disk='<path d="M6 5.500H16V16.500H6Z" fill="#1c1c1c"/><path d="M8.500 5.500H13.500V9H8.500Z" fill="#cfcfcf"/><path d="M9.500 14H12.500V16.500H9.500Z" fill="#777"/>';
const dot='<i style="width:20px;height:20px;border-radius:50%;background:#fdb90f;border:1.500px solid #a07b20;flex:none"></i>';
const phones='<path d="M4 13H6.500V9.500Q6 8 5 7Q5 1.500 9.500 1.500Q14 1.500 14 7Q13 8 12.500 9.500V13H15" stroke="#333" fill="none" stroke-width="1.700"/>';
const bx=(w,m,bg='#d6d6d6',h=21)=>`<div class="c" style="width:${w}px;height:${h}px;border:2px solid #707070;background:${bg};flex:none">${m}</div>`;
def('device-card',`:host{display:flex;flex-direction:column;background:#a4a4a4;border-radius:6px 6px 0 0;overflow:hidden;flex:none;height:298px}.t{height:28px;display:flex;align-items:center;flex:none;background:var(--tb,#b6b6b6);padding:0 4px 0 5px}.b{flex:1;display:flex}`,()=>`<div class="t"><slot name="title"></slot></div><div class="b"><slot></slot></div>`);
def('rail-meter',`:host{display:flex;gap:3px;flex:none;flex-direction:row;padding-top:65px;height:298px;align-items:flex-start}i{width:4px;height:175px;background:linear-gradient(#222 0 17px,#777 17px 20px,#222 20px)}`,()=>'<i></i><i></i>');
def('eq-eight',`:host{display:flex}.k{width:84.500px}.m{width:607px}.r{width:91px;padding-left:9px}.d{height:216px;background:#1f1f1f}.bd{display:flex;height:54px;background:#a4a4a4}.b{width:76.300px;flex:none;border-right:3px solid #b3b3b3;padding:9px 0 0 5px}.b>div{display:flex;align-items:center}svg text{font-family:Inter}`,()=>{
 let g='';for(let d=-1;d<3;d++)for(let n=1;n<10;n++){const x=182+181*(d+Math.log10(n));if(x>50&&x<605&&!(n==1))g+=`<path d="M${x.toFixed(1)} 0V215" stroke="#353535"/>`}
 [182,361,544].forEach(x=>g+=`<path d="M${x} 0V190" stroke="#4c4c4c" stroke-width="2"/>`);[21,64,151,195].forEach(y=>g+=`<path d="M40 ${y}H605" stroke="#343434" stroke-width="1.500"/>`);
 const tx=(x,y,s,a='end')=>`<text x="${x}" y="${y+6}" font-size="17" fill="#8a8a8a" text-anchor="${a}">${s}</text>`;
 g+=tx(31,22,'12')+tx(31,65,'6')+tx(31,152,'-6')+tx(31,196,'-12')+tx(182,208,'100','middle')+tx(361,208,'1k','middle')+tx(544,208,'10k','middle');
 g+='<path d="M0 108H607" stroke="#101818" stroke-width="8"/>'+tx(31,109,'0')+'<path d="M0 108H607" stroke="#52bfbd" stroke-width="3.500"/>';
 [94.5,239,361,485].forEach((x,i)=>g+=`<circle cx="${x}" cy="107.500" r="9.500" fill="${i==2?'#fdb90f':'#1f1f1f'}" fill-opacity="${i==2?1:.6}" stroke="#e2b932" stroke-width="2.800"/><text x="${x}" y="112" font-size="13" font-weight="600" fill="${i==2?'#7a5600':'#c9a53a'}" text-anchor="middle">${i+1}</text>`);
 const sh=['M0 1H4L10 7L4 13H0M10 7H24','b','b','M24 1H18Q11 2 10 7Q11 12 18 13H24M0 7H10','b','b','b','M0 2H14Q20 2 20 13'];
 const bell='M0 7H3.500Q6 .5 12 .5Q18 .5 20.500 7Q18 13.500 12 13.500Q6 13.500 3.500 7M20.500 7H24';
 const lab=(s,w)=>T(s,w);
 return `<div class="k v">${stack(1686,[[1698,20,lab('Freq',35)],[1730,44,dial(8,-16,1)],[1757,20,lab('1000 Hz',60)],[1787,20,lab('Gain',35)],[1828,44,dial(0,-18)],[1856,20,lab('0.00 dB',57)],[1888,20,lab('Q',11)],[1919,44,dial(-11,-16,1)],[1946,20,lab('0.71',33)]])}</div>
 <div class="m"><div class="d">${svg(607,216,g)}</div><div class="bd">${sh.map((s,i)=>`<div class="b" style="${i<4?'':'background:#9a9a9a'}"><div>${bx(61,svg(24,14,`<path d="${s=='b'?bell:s}" stroke="#333" fill="none" stroke-width="1.700"/>`)+'<i style="width:14px"></i>'+tri('#222',9,9),i<4?'#dcdcdc':'#a4a4a4',22)}</div><div style="margin-top:4px;padding-left:12px">${bx(17,'',i<4?'#10e4ee':'#d8d8d8',19)}<i style="width:11px"></i>${T(i+1,9)}</div></div>`).join('')}</div></div>
 <div class="r v" style="align-items:flex-start">${stack(1686,[[1707,21,bx(33,svg(19,15,phones))+'<i style="width:9px"></i>'+bx(34,svg(22,14,'<path d="M1 14V8M5 14V4M9 14V9M13 14V2M17 14V7M21 14V10" stroke="#a06a00" stroke-width="2"/>'),'#fdb90f')],[1731,20,T('Mode',43)],[1752,21,bx(76,T('Stereo',52)+'<i style="width:5px"></i>'+tri('#111',10,9),'#dedede')],[1776,20,T('Edit',30)],[1797,21,bx(76,T('A',9,'color:#777'),'#cacaca')],[1823,20,T('Adapt. Q',69)],[1844,21,bx(76,T('On',21),'#fdb90f')],[1870,20,T('Scale',42)],[1892,21,bx(76,T('100 %',44),'linear-gradient(90deg,#10cfd8 0 54px,#dedede 54px)')],[1919,20,T('Gain',35)],[1941,21,bx(76,T('0.00 dB',56),'linear-gradient(90deg,#10cfd8 0 38px,#dedede 38px)')]])}</div>`;
});
def('utility-dev',`:host{display:flex}.a{width:113px}.o{width:112px;border-left:2px solid #8a8a8a;margin-top:6px}`,()=>
 `<div class="a v">${stack(1686,[[1703,20,T('Input',43)],[1730.5,21,bx(43,T('Ø L',24))+'<i style="width:6px"></i>'+bx(43,T('Ø R',26))],[1756,21,bx(92,T('Stereo',52)+'<i style="width:21px"></i>'+tri('#111',10,9),'#dedede')],[1787,20,T('Width',47)],[1828,44,dial(0,-18)],[1856,20,T('100 %',46)],[1881.5,21,bx(92,T('Mono',43))],[1917.5,21,bx(92,T('Bass Mono',84))],[1943.5,21,bx(65,T('120 Hz',51),'#a0a0a0')+'<i style="width:7px"></i>'+svg(21,21,`<circle cx="10.500" cy="10.500" r="9.500" fill="#b8b8b8" stroke="#555" stroke-width="1.500"/><g transform="translate(1 3)">${phones}</g>`)]])}</div>
 <div class="o v">${stack(1692,[[1703,20,T('Output',56)],[1739,20,T('Gain',35)],[1779,44,dial(0,-18)],[1808,20,T('0.00 dB',57)],[1840,20,T('Balance',61)],[1880,44,dial(0,-18)],[1908,20,T('C',11)],[1942.5,21,bx(50,T('Mute',40))+'<i style="width:8px"></i>'+bx(29,T('DC',21))]])}</div>`);
def('device-rack',`:host{display:flex;margin-top:13.500px;height:298px;padding-left:4px}.drop{margin-left:3px;width:2161px;background:#a4a4a4;border-radius:6px 6px 0 0;padding-top:6px}`,()=>
 `<rail-meter></rail-meter><device-card style="width:783px;--tb:#adc5cb"><div slot="title" class="h" style="align-items:center;width:100%">${dot}<i style="width:5px"></i>${round('<path d="M8 5L16 11L8 17Z" fill="#111"/>')}<i style="width:6px"></i>${T('EQ Eight',66)}<i style="width:6px"></i>${svg(17,20,'<path d="M4.500 11L3.500 4M8 10V1.500M11.500 10L12.500 3M14.500 12L16.500 7M4 14L1 10" stroke="#3535e0" stroke-width="2.200" stroke-linecap="round"/><path d="M3.500 10H14.500Q15 15 11.500 19H7.500Q3.500 15 3.500 10Z" fill="#3535e0"/>')}<i style="flex:1"></i>${round(swap)}<i style="width:4px"></i>${round(disk)}</div><eq-eight></eq-eight></device-card>
 <rail-meter style="margin:0 2px"></rail-meter><device-card style="width:225px"><div slot="title" class="h" style="align-items:center;width:100%">${dot}<i style="width:8px"></i>${T('Utility',48)}<i style="flex:1"></i>${round(swap)}<i style="width:4px"></i>${round(disk)}</div><utility-dev></utility-dev></device-card>
 <rail-meter style="margin-left:3px"></rail-meter><div class="drop c">${T('Drop Audio Effects Here',192)}</div>`);

/* ---------- shell ---------- */
def('live-app',`:host{width:3238px;height:1964px;background:#000}.top{height:6px;display:flex}.w{width:3230px;height:1950px;margin-left:3px;background:#808080;overflow:hidden;display:flex;flex-direction:column}.m{display:flex}.bt{height:8px;background:linear-gradient(90deg,#080a03,#141606 20%,#0b0d04 40%,#181507 60%,#0b0c05 80%,#060d10)}`,()=>
 `<div class="top">${run(0,[[0,291,'','background:#0d0d0d'],[291,342,'','background:#1c1c05'],[342,1242,'','background:#0e2033'],[1242,1298,'','background:#000'],[1298,1662,'','background:#e4e2e2'],[1662,2300,'','background:linear-gradient(90deg,#151a2c,#10182c 50%,#2a2632)'],[2300,2945,'','background:linear-gradient(90deg,#2a2632,#3a3028 50%,#2b2a14)'],[2945,3035,'','background:#e8e8e8'],[3035,3238,'','background:linear-gradient(90deg,#2c2012,#121a22)']])}</div>
 <div class="w"><tool-bar></tool-bar><div class="m"><browser-panel></browser-panel><arrange-view></arrange-view></div><device-rack></device-rack></div><div class="bt"></div>
 ${svg(24,34,'<path d="M1 1V26L7 20.500L11.500 31L16 29L11.500 19H20Z" fill="#0a0a0a" stroke="#e8f8fa" stroke-width="1.500"/>','position:absolute;left:2835px;top:988px')}`);

/* tune tracking so each label takes its nominal width */
(function fit(root){
  root.querySelectorAll('*').forEach(e=>{
    if(e.localName==='t-x'&&+e.getAttribute('w')){
      const w=+e.getAttribute('w'),n=[...e.textContent].length,now=e.getBoundingClientRect().width;
      if(now)e.style.letterSpacing=((w-now)/n).toFixed(3)+'px';
    }
    if(e.shadowRoot)fit(e.shadowRoot);
  });
})(document);
</script></body></html>
